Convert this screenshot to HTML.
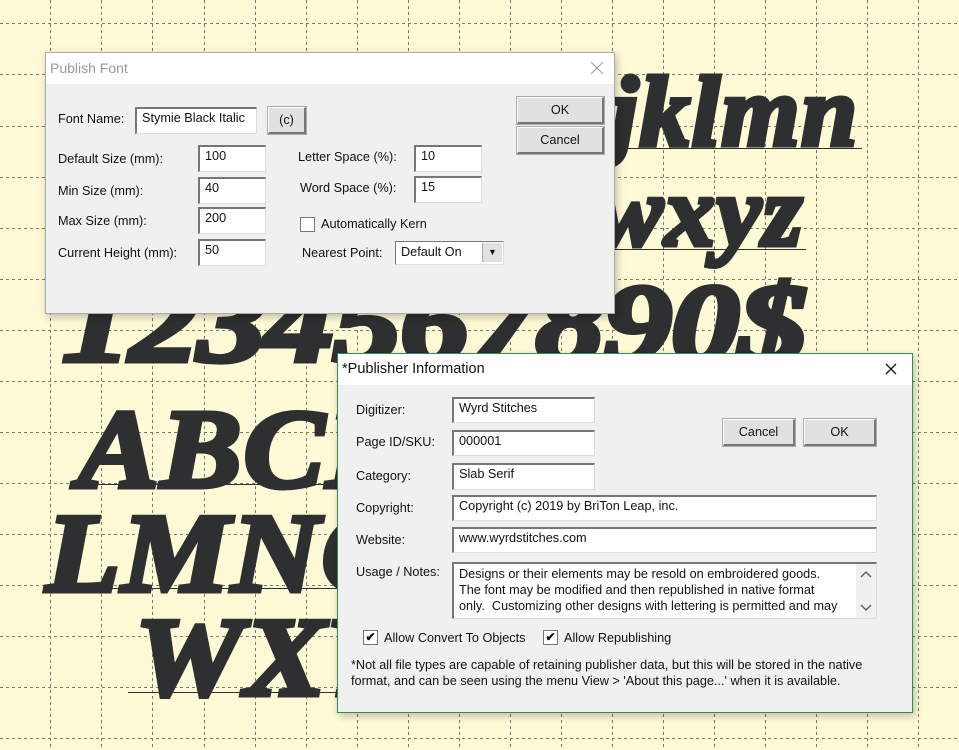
<!DOCTYPE html>
<html><head><meta charset="utf-8"><style>
*{margin:0;padding:0;box-sizing:border-box}
body{width:959px;height:750px;overflow:hidden;position:relative;background:#fffad6;font-family:"Liberation Sans",Tahoma,sans-serif;font-size:12.7px;color:#111}
.grid{position:absolute;left:0;top:0;width:959px;height:750px}
.big{position:absolute;font-family:"Liberation Serif",serif;font-weight:bold;font-style:italic;color:#2e2f31;-webkit-text-stroke:5px #2e2f31;white-space:nowrap;line-height:1;letter-spacing:2px}
.ul{position:absolute;height:1px;background:#2e2f31}
.a{position:absolute;white-space:nowrap}
.dlg{position:absolute;background:#f0f0f0;box-shadow:2px 3px 8px rgba(0,0,0,.25)}
.tb{position:absolute;left:0;top:0;right:0;background:#fff}
.in{position:absolute;background:#fff;border-top:2px solid #777;border-left:2px solid #777;border-right:1px solid #ddd;border-bottom:1px solid #ddd;padding:2px 5px;white-space:nowrap;overflow:hidden}
.btn{position:absolute;background:#e1e1e1;border:1px solid #fff;border-right:2px solid #777;border-bottom:2px solid #777;outline:1px solid #aaa;text-align:center}
.cb{position:absolute;width:15px;height:15px;background:#fff;border:1px solid #777;font-size:12px;line-height:13px;text-align:center;font-weight:bold}
</style></head><body>
<svg class="grid" width="959" height="750">
<g stroke="#7a7a7a" stroke-width="1" stroke-dasharray="3,3">
<line x1="50.5" y1="0" x2="50.5" y2="750"/><line x1="101.5" y1="0" x2="101.5" y2="750"/><line x1="152.5" y1="0" x2="152.5" y2="750"/><line x1="204.5" y1="0" x2="204.5" y2="750"/><line x1="255.5" y1="0" x2="255.5" y2="750"/><line x1="306.5" y1="0" x2="306.5" y2="750"/><line x1="357.5" y1="0" x2="357.5" y2="750"/><line x1="408.5" y1="0" x2="408.5" y2="750"/><line x1="459.5" y1="0" x2="459.5" y2="750"/><line x1="510.5" y1="0" x2="510.5" y2="750"/><line x1="561.5" y1="0" x2="561.5" y2="750"/><line x1="612.5" y1="0" x2="612.5" y2="750"/><line x1="663.5" y1="0" x2="663.5" y2="750"/><line x1="714.5" y1="0" x2="714.5" y2="750"/><line x1="765.5" y1="0" x2="765.5" y2="750"/><line x1="816.5" y1="0" x2="816.5" y2="750"/><line x1="867.5" y1="0" x2="867.5" y2="750"/><line x1="918.5" y1="0" x2="918.5" y2="750"/>
<line y1="23.5" x1="0" y2="23.5" x2="959"/><line y1="74.5" x1="0" y2="74.5" x2="959"/><line y1="126.5" x1="0" y2="126.5" x2="959"/><line y1="177.5" x1="0" y2="177.5" x2="959"/><line y1="228.5" x1="0" y2="228.5" x2="959"/><line y1="279.5" x1="0" y2="279.5" x2="959"/><line y1="330.5" x1="0" y2="330.5" x2="959"/><line y1="381.5" x1="0" y2="381.5" x2="959"/><line y1="432.5" x1="0" y2="432.5" x2="959"/><line y1="483.5" x1="0" y2="483.5" x2="959"/><line y1="534.5" x1="0" y2="534.5" x2="959"/><line y1="585.5" x1="0" y2="585.5" x2="959"/><line y1="636.5" x1="0" y2="636.5" x2="959"/><line y1="687.5" x1="0" y2="687.5" x2="959"/><line y1="738.5" x1="0" y2="738.5" x2="959"/>
</g></svg>

<div class="big" style="right:100px;top:62px;font-size:100px">abcdefghijklmn</div>
<div class="ul" style="left:560px;top:148px;width:302px"></div>
<div class="big" style="right:155px;top:162px;font-size:100px">opqrstuvwxyz</div>
<div class="ul" style="left:560px;top:249px;width:246px"></div>
<div class="big" style="left:62px;top:268px;font-size:112px;letter-spacing:-1px;transform:scaleX(1.23);transform-origin:left top">1234567890$</div>
<div style="position:absolute;left:0;top:380px;width:340px;height:330px;overflow:hidden">
<div class="big" style="left:78px;top:14px;font-size:112px;transform:scaleX(1.08);transform-origin:left top">ABCDEFG</div>
<div class="ul" style="left:75px;top:104px;width:270px"></div>
<div class="big" style="left:46px;top:118px;font-size:112px;transform:scaleX(1.08);transform-origin:left top">LMNOPQ</div>
<div class="ul" style="left:43px;top:208px;width:300px"></div>
<div class="big" style="left:135px;top:222px;font-size:112px;transform:scaleX(1.08);transform-origin:left top">WXYZ</div>
<div class="ul" style="left:128px;top:312px;width:220px"></div>
</div>

<!-- Dialog 1 -->
<div class="dlg" style="left:45px;top:52px;width:570px;height:262px;border:1px solid #aaa">
<div class="tb" style="height:31px"><span class="a" style="left:4px;top:7px;font-size:14px;color:#999">Publish Font</span>
<svg class="a" style="left:544px;top:8px" width="14" height="14"><path d="M1 1L13 13M13 1L1 13" stroke="#999" stroke-width="1"/></svg></div>
</div>
<div class="a" style="left:58px;top:112px">Font Name:</div>
<div class="in" style="left:135px;top:107px;width:122px;height:27px">Stymie Black Italic</div>
<div class="btn" style="left:268px;top:107px;width:38px;height:27px;line-height:24px">(c)</div>
<div class="a" style="left:58px;top:152px">Default Size (mm):</div>
<div class="in" style="left:198px;top:145px;width:68px;height:27px">100</div>
<div class="a" style="left:58px;top:184px">Min Size (mm):</div>
<div class="in" style="left:198px;top:177px;width:68px;height:27px">40</div>
<div class="a" style="left:58px;top:214px">Max Size (mm):</div>
<div class="in" style="left:198px;top:207px;width:68px;height:27px">200</div>
<div class="a" style="left:58px;top:246px">Current Height (mm):</div>
<div class="in" style="left:198px;top:239px;width:68px;height:27px">50</div>
<div class="a" style="left:298px;top:150px">Letter Space (%):</div>
<div class="in" style="left:414px;top:145px;width:68px;height:27px">10</div>
<div class="a" style="left:300px;top:181px">Word Space (%):</div>
<div class="in" style="left:414px;top:176px;width:68px;height:27px">15</div>
<div class="cb" style="left:300px;top:217px"></div>
<div class="a" style="left:321px;top:217px">Automatically Kern</div>
<div class="a" style="left:302px;top:246px">Nearest Point:</div>
<div class="in" style="left:395px;top:241px;width:109px;height:24px;border-width:1px;padding-top:3px">Default On
<div style="position:absolute;right:1px;top:1px;width:20px;height:19px;background:#e1e1e1;border-left:1px solid #aaa;font-size:9px;text-align:center;line-height:19px">▼</div></div>
<div class="btn" style="left:517px;top:97px;width:87px;height:27px;line-height:24px">OK</div>
<div class="btn" style="left:517px;top:127px;width:87px;height:27px;line-height:24px">Cancel</div>

<!-- Dialog 2 -->
<div class="dlg" style="left:337px;top:353px;width:576px;height:360px;border:1px solid #2e8b57">
<div class="tb" style="height:31px"><span class="a" style="left:4px;top:7px;font-size:14.5px;color:#111">*Publisher Information</span>
<svg class="a" style="left:547px;top:9px" width="12" height="12"><path d="M1 1L11 11M11 1L1 11" stroke="#111" stroke-width="1.3"/></svg></div>
</div>
<div class="a" style="left:356px;top:403px">Digitizer:</div>
<div class="in" style="left:452px;top:397px;width:143px;height:26px">Wyrd Stitches</div>
<div class="a" style="left:356px;top:435px">Page ID/SKU:</div>
<div class="in" style="left:452px;top:430px;width:143px;height:26px">000001</div>
<div class="a" style="left:356px;top:469px">Category:</div>
<div class="in" style="left:452px;top:463px;width:143px;height:27px">Slab Serif</div>
<div class="a" style="left:356px;top:501px">Copyright:</div>
<div class="in" style="left:452px;top:495px;width:425px;height:26px">Copyright (c) 2019 by BriTon Leap, inc.</div>
<div class="a" style="left:356px;top:533px">Website:</div>
<div class="in" style="left:452px;top:527px;width:425px;height:26px">www.wyrdstitches.com</div>
<div class="a" style="left:356px;top:565px">Usage / Notes:</div>
<div class="in" style="left:452px;top:562px;width:425px;height:57px;line-height:16px;padding-top:2px">Designs or their elements may be resold on embroidered goods.<br>The font may be modified and then republished in native format<br>only.&nbsp; Customizing other designs with lettering is permitted and may
<svg style="position:absolute;right:0;top:0;background:#f0f0f0" width="20" height="54"><path d="M5 13L10 8L15 13M5 41L10 46L15 41" stroke="#555" stroke-width="1.3" fill="none"/></svg></div>
<div class="btn" style="left:723px;top:419px;width:72px;height:27px;line-height:24px">Cancel</div>
<div class="btn" style="left:804px;top:419px;width:72px;height:27px;line-height:24px">OK</div>
<div class="cb" style="left:363px;top:630px">✔</div>
<div class="a" style="left:384px;top:631px">Allow Convert To Objects</div>
<div class="cb" style="left:543px;top:630px">✔</div>
<div class="a" style="left:564px;top:631px">Allow Republishing</div>
<div class="a" style="left:351px;top:658px">*Not all file types are capable of retaining publisher data, but this will be stored in the native</div>
<div class="a" style="left:351px;top:674px">format, and can be seen using the menu View &gt; 'About this page...' when it is available.</div>
</body></html>
